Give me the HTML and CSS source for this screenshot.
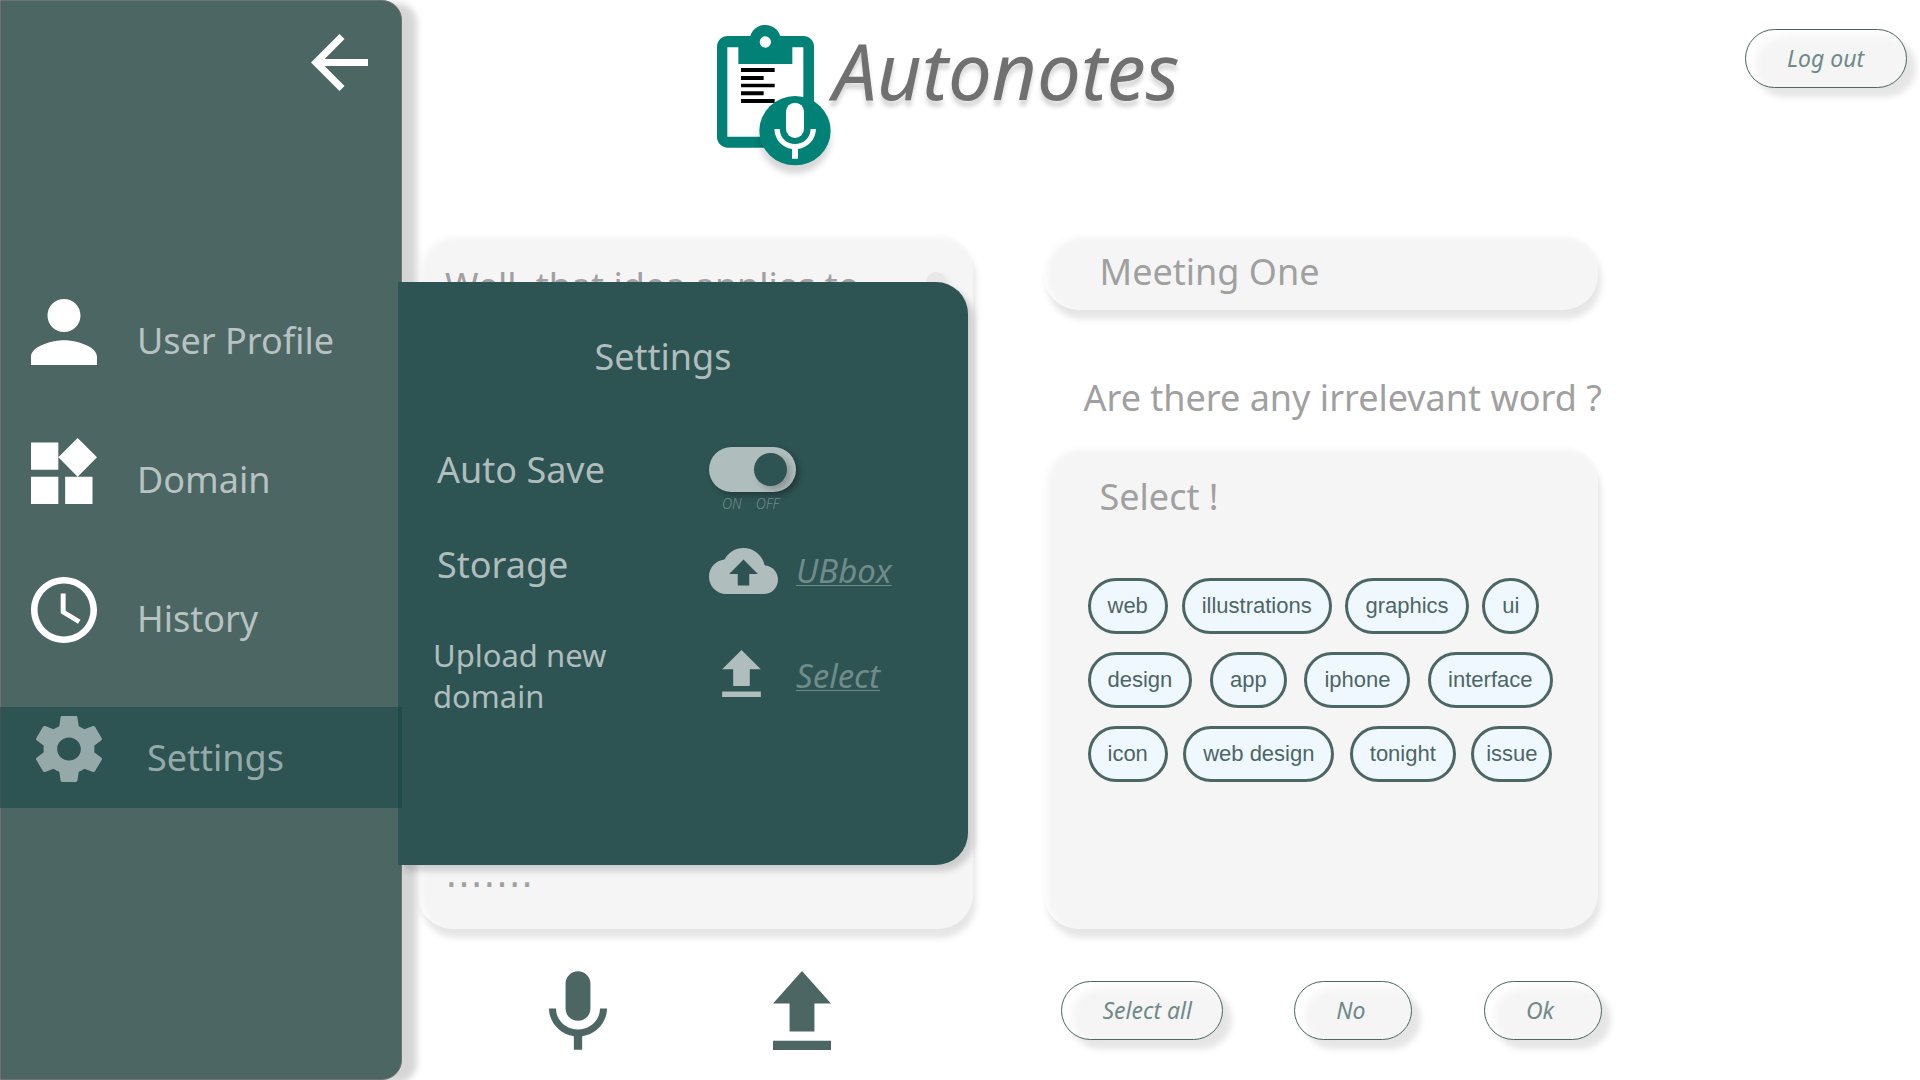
FILE: index.html
```html
<!DOCTYPE html>
<html lang="en">
<head>
<meta charset="utf-8">
<meta name="viewport" content="width=device-width, initial-scale=1">
<title>Autonotes</title>
<link rel="stylesheet" href="styles.css">
</head>
<body>
<div class="app">
  <aside class="sidebar">
    <button class="icon-button back" type="button" aria-label="Close menu">
      <svg width="57" height="57" viewBox="4 4 16 16"><path d="M20 11H7.830l5.590-5.590L12 4l-8 8 8 8 1.410-1.410L7.830 13H20z"/></svg>
    </button>

    <section class="settings" aria-labelledby="settings-title">
      <h2 class="settings-title" id="settings-title">Settings</h2>
      <div class="setting">
        <label class="setting-label" for="auto-save">Auto Save</label>
        <div class="switch-box">
          <input class="switch" type="checkbox" role="switch" id="auto-save">
          <div class="switch-legend"><span>ON</span><span>OFF</span></div>
        </div>
      </div>
      <div class="setting setting-storage">
        <span class="setting-label">Storage</span>
        <svg class="cloud" width="69" height="46" viewBox="0 4 24 16"><path d="M19.350 10.040C18.670 6.590 15.640 4 12 4 9.110 4 6.600 5.640 5.350 8.040 2.340 8.360 0 10.910 0 14c0 3.310 2.690 6 6 6h13c2.760 0 5-2.240 5-5 0-2.640-2.050-4.780-4.650-4.960zM14 13v4h-4v-4H7l5-5 5 5h-3z"/></svg>
        <a class="setting-link" href="#ubbox">UBbox</a>
      </div>
      <div class="setting setting-upload">
        <span class="setting-label setting-label-small">Upload new domain</span>
        <svg class="upload" width="39" height="47" viewBox="5 3 14 17"><path d="M9 16h6v-6h4l-7-7-7 7h4zm-4 2h14v2H5z"/></svg>
        <a class="setting-link" href="#select">Select</a>
      </div>
    </section>

    <nav class="menu">
      <a class="menu-item" href="#profile">
        <svg class="menu-icon" viewBox="4 4 16 16"><path d="M12 12c2.210 0 4-1.790 4-4s-1.790-4-4-4-4 1.790-4 4 1.790 4 4 4zm0 2c-2.670 0-8 1.340-8 4v2h16v-2c0-2.660-5.330-4-8-4z"/></svg>
        User Profile
      </a>
      <a class="menu-item" href="#domain">
        <svg class="menu-icon" viewBox="3 1.680 19.320 19.320"><path d="M13 13v8h8v-8h-8zM3 21h8v-8H3v8zM3 3v8h8V3H3zm13.660-1.310L11 7.340 16.660 13l5.660-5.660-5.660-5.650z"/></svg>
        Domain
      </a>
      <a class="menu-item" href="#history">
        <svg class="menu-icon" viewBox="2 2 20 20"><path d="M11.990 2C6.470 2 2 6.480 2 12s4.470 10 9.990 10C17.520 22 22 17.520 22 12S17.520 2 11.990 2zM12 20c-4.420 0-8-3.580-8-8s3.580-8 8-8 8 3.580 8 8-3.580 8-8 8zm.5-13H11v6l5.250 3.150.75-1.230-4.500-2.670z"/></svg>
        History
      </a>
      <a class="menu-item menu-item-active" href="#settings" aria-current="page">
        <svg class="menu-icon" viewBox="2.270 2 19.460 20" preserveAspectRatio="none"><path d="M19.430 12.980c.04-.32.07-.64.07-.98s-.03-.66-.07-.98l2.110-1.650c.19-.15.24-.42.12-.64l-2-3.460c-.12-.22-.39-.3-.61-.22l-2.490 1c-.52-.4-1.080-.73-1.690-.98l-.38-2.650C14.460 2.180 14.250 2 14 2h-4c-.25 0-.46.18-.49.42l-.38 2.650c-.61.25-1.170.59-1.690.98l-2.490-1c-.23-.09-.49 0-.61.22l-2 3.460c-.13.22-.07.49.12.64l2.110 1.650c-.04.32-.07.65-.07.98s.03.66.07.98l-2.110 1.650c-.19.15-.24.42-.12.64l2 3.460c.12.22.39.3.61.22l2.490-1c.52.4 1.080.73 1.690.98l.38 2.650c.03.24.24.42.49.42h4c.25 0 .46-.18.49-.42l.38-2.650c.61-.25 1.170-.59 1.690-.98l2.490 1c.23.09.49 0 .61-.22l2-3.460c.12-.22.07-.49-.12-.64l-2.110-1.650zM12 15.500c-1.930 0-3.500-1.570-3.500-3.500s1.570-3.500 3.500-3.500 3.500 1.570 3.500 3.500-1.570 3.500-3.500 3.500z"/></svg>
        Settings
      </a>
    </nav>
  </aside>

  <main class="main">
    <header class="header">
      <div class="brand">
        <svg class="logo" width="117" height="150" viewBox="48 42 351 450" aria-hidden="true">
          <path fill="#028177" d="M83 78H151C158 57 175 45 196 45S234 57 241 78H310A32 32 0 0 1 342 110V381A32 32 0 0 1 310 413H83A32 32 0 0 1 51 381V110A32 32 0 0 1 83 78z"/>
          <path fill="#fff" d="M82 112H115V162H277V112H310V380H82z"/>
          <circle fill="#fff" cx="196" cy="96" r="17"/>
          <path fill="#000" d="M123 174H224V186H123zM123 198H191V210H123zM123 221H224V232H123zM123 244H191V256H123zM123 267H224V279H123z"/>
          <g class="logo-mic">
            <ellipse fill="#028177" cx="285" cy="362" rx="107" ry="104"/>
          </g>
          <rect fill="#fff" x="258" y="278" width="54" height="106" rx="27"/>
          <path fill="#fff" d="M223 357H239C241 388 262 402 285 402S330 388 332 357H348C346 392 323 412 294 417V446H276V417C247 412 225 392 223 357z"/>
        </svg>
        <h1 class="brand-name">Autonotes</h1>
      </div>
      <button class="pill pill-wide" type="button">Log out</button>
    </header>

    <div class="content">
      <section class="column">
        <div class="card transcript">
          <div class="transcript-head">
            <p class="line">Well, that idea applies to</p>
            <span class="scroll-thumb"></span>
          </div>
          <p class="line line-dots">…….</p>
        </div>
        <div class="media-actions">
          <button class="icon-button" type="button" aria-label="Record">
            <svg width="58" height="79" viewBox="5 2 14 19"><path d="M12 14c1.660 0 3-1.340 3-3V5c0-1.660-1.340-3-3-3S9 3.340 9 5v6c0 1.660 1.340 3 3 3zm5.300-3c0 3-2.540 5.100-5.300 5.100S6.700 14 6.700 11H5c0 3.410 2.720 6.230 6 6.720V21h2v-3.280c3.280-.48 6-3.300 6-6.720h-1.700z"/></svg>
          </button>
          <button class="icon-button" type="button" aria-label="Upload">
            <svg width="58" height="79" viewBox="5 3 14 17" preserveAspectRatio="none"><path d="M9 16h6v-6h4l-7-7-7 7h4zm-4 2h14v2H5z"/></svg>
          </button>
        </div>
      </section>

      <section class="column">
        <input class="card meeting" type="text" value="Meeting One" aria-label="Meeting name">
        <p class="line question">Are there any irrelevant word ?</p>
        <div class="card words">
          <h2 class="line words-title">Select !</h2>
          <div class="tags">
            <div class="tag-row tag-row-short">
              <button class="tag" type="button">web</button>
              <button class="tag" type="button">illustrations</button>
              <button class="tag" type="button">graphics</button>
              <button class="tag" type="button">ui</button>
            </div>
            <div class="tag-row">
              <button class="tag" type="button">design</button>
              <button class="tag" type="button">app</button>
              <button class="tag" type="button">iphone</button>
              <button class="tag" type="button">interface</button>
            </div>
            <div class="tag-row">
              <button class="tag" type="button">icon</button>
              <button class="tag" type="button">web design</button>
              <button class="tag" type="button">tonight</button>
              <button class="tag tag-tight" type="button">issue</button>
            </div>
          </div>
        </div>
        <div class="word-actions">
          <button class="pill pill-wide" type="button">Select all</button>
          <button class="pill" type="button">No</button>
          <button class="pill" type="button">Ok</button>
        </div>
      </section>
    </div>
  </main>
</div>
</body>
</html>
```
FILE: styles.css
```css
* {
  box-sizing: border-box;
}

body {
  margin: 0;
  background: #fff;
  color: #a0a0a0;
  font-family: "Noto Sans", "Open Sans", sans-serif;
  font-size: 36px;
  line-height: 48px;
}

h1, h2, p {
  margin: 0;
  font-weight: 400;
}

button, input {
  font: inherit;
}

svg {
  display: block;
  fill: currentColor;
}

.app {
  display: grid;
  grid-template-columns: 402px 1fr;
  min-height: 100vh;
}

.icon-button {
  padding: 0;
  border: 0;
  background: none;
  color: #4c6664;
}

/* Sidebar */

.sidebar {
  position: relative;
  z-index: 1;
  display: flex;
  flex-direction: column;
  border: 1px solid #707070;
  border-radius: 0 20px 20px 0;
  background: #4c6664;
  box-shadow: 15px 3px 6px rgba(0, 0, 0, 0.16);
}

.back {
  align-self: flex-end;
  margin: 33px 33px 0 0;
  color: #fff;
}

.menu {
  display: flex;
  flex-direction: column;
  gap: 38px;
  margin: 199px -1px 0;
}

.menu-item {
  display: flex;
  align-items: center;
  gap: 40px;
  height: 101px;
  padding-left: 31px;
  color: #b7c2c1;
  text-decoration: none;
}

.menu-icon {
  align-self: flex-start;
  width: 66px;
  height: 66px;
  margin-top: 9px;
  color: #fff;
}

.menu-item-active {
  position: relative;
  z-index: 2;
  gap: 45px;
  padding-left: 36px;
  background: rgba(23, 69, 69, 0.58);
  color: #95aaa8;
}

.menu-item-active .menu-icon {
  color: #95aaa8;
}

/* Settings flyout, opened beside the active menu item */

.settings {
  position: absolute;
  top: 281px;
  left: 397px;
  z-index: 1;
  width: 570px;
  min-height: 583px;
  padding: 51px 34px 0;
  border-radius: 0 32px 32px 0;
  background: #2d5352;
  box-shadow: 6px 6px 6px rgba(0, 0, 0, 0.16);
  color: #afbdbc;
}

.settings-title {
  margin-bottom: 66px;
  padding-right: 40px;
  font-size: 36px;
  text-align: center;
}

.setting {
  display: grid;
  grid-template-columns: 277px 87px 1fr;
  align-items: center;
}

.setting-label {
  align-self: start;
  padding-left: 5px;
  line-height: 45px;
}

.setting-storage {
  margin-top: 36px;
}

.setting-storage .setting-label {
  line-height: 34px;
}

.setting-upload {
  margin-top: 41px;
}

.setting-label-small {
  max-width: 200px;
  padding-left: 1px;
  font-size: 31px;
  line-height: 41px;
}

.setting-upload .upload {
  align-self: start;
  margin: 15px 0 0 13px;
}

.setting-link {
  color: #6f8b8a;
  font-size: 33px;
  font-style: italic;
  line-height: 44px;
  text-decoration-thickness: 1px;
  text-underline-offset: 2px;
  text-decoration-skip-ink: none;
}

.switch {
  display: block;
  width: 87px;
  height: 45px;
  margin: 0;
  padding: 6px 9px;
  border-radius: 23px;
  appearance: none;
  background: #afbdbc;
  box-shadow: 3px 3px 6px rgba(0, 0, 0, 0.3);
}

.switch::before {
  content: "";
  display: block;
  width: 33px;
  height: 33px;
  margin-left: auto;
  border-radius: 50%;
  background: #2d5352;
  box-shadow: 4px 4px 6px rgba(0, 0, 0, 0.2);
}

.switch:checked::before {
  margin-left: 0;
}

.switch-legend {
  display: flex;
  gap: 14px;
  padding: 4px 0 0 13px;
  color: #6f8b8a;
  font-size: 14px;
  font-style: italic;
  font-weight: 300;
  line-height: 16px;
}

/* Header */

.main {
  display: flex;
  flex-direction: column;
}

.header {
  display: flex;
  align-items: flex-start;
  justify-content: space-between;
  height: 234px;
  padding: 24px 13px 0 314px;
}

.header .pill {
  margin-top: 5px;
}

.brand {
  display: flex;
}

.logo {
  overflow: visible;
}

.logo-mic {
  filter: drop-shadow(0 24px 9px rgba(0, 0, 0, 0.16));
}

.brand-name {
  color: #707070;
  font-size: 78px;
  font-style: italic;
  line-height: 92px;
  text-shadow: 0 6px 4px rgba(0, 0, 0, 0.16);
}

/* Content */

.content {
  display: grid;
  flex: 1;
  grid-template-columns: minmax(0, 1fr) minmax(0, 1fr);
  gap: 71px;
  padding: 0 322px 0 16px;
}

.column {
  display: flex;
  flex-direction: column;
}

.card {
  border: 0;
  border-radius: 35px;
  background: #f5f5f5;
  box-shadow: 3px 9px 6px rgba(0, 0, 0, 0.1), inset 3px 3px 6px #fff;
}

.line {
  font-size: 36px;
  line-height: 48px;
  white-space: nowrap;
}

.transcript {
  display: flex;
  flex: 1;
  flex-direction: column;
  justify-content: space-between;
  padding: 28px 27px 31px 27px;
}

.transcript-head {
  display: flex;
  justify-content: space-between;
}

.line-dots {
  font-family: "DejaVu Sans", sans-serif;
  font-size: 38px;
}

.scroll-thumb {
  width: 20px;
  height: 48px;
  margin-top: 10px;
  border-radius: 10px;
  background: #e8e8e8;
  box-shadow: 4px 3px 6px rgba(0, 0, 0, 0.06);
}

.media-actions {
  display: flex;
  gap: 166px;
  height: 151px;
  padding: 42px 0 30px 131px;
}

.meeting {
  width: 100%;
  height: 76px;
  padding: 0 56px 2px;
  color: inherit;
}

.question {
  margin: 64px 0 24px 40px;
}

.words {
  flex: 1;
  padding: 27px 44px;
}

.words-title {
  margin-bottom: 57px;
  padding-left: 12px;
}

.tags {
  display: flex;
  flex-direction: column;
  gap: 18px;
  max-width: 465px;
}

.tag-row {
  display: flex;
  justify-content: space-between;
}

.tag-row-short {
  max-width: 452px;
}

.tag {
  height: 56px;
  padding: 0 17px;
  border: 3px solid #4c6664;
  border-radius: 28px;
  background: #f0f8ff;
  color: #4c6664;
  font-family: "Liberation Sans", Arial, sans-serif;
  font-size: 22px;
  line-height: 24px;
}

.tag-tight {
  padding: 0 12px;
}

.word-actions {
  display: flex;
  justify-content: space-between;
  height: 151px;
  margin-right: -4px;
  padding: 52px 0 0 17px;
}

.pill {
  width: 118px;
  height: 59px;
  padding: 0 0 2px 41px;
  border: 1px solid #4c6664;
  border-radius: 30px;
  background: #f5f5f5;
  box-shadow: 9px 9px 6px rgba(0, 0, 0, 0.1), inset 9px 6px 9px #fff;
  color: #6f8a88;
  font-size: 23px;
  font-style: italic;
  line-height: 32px;
  text-align: left;
}

.pill-wide {
  width: 162px;
}
```
